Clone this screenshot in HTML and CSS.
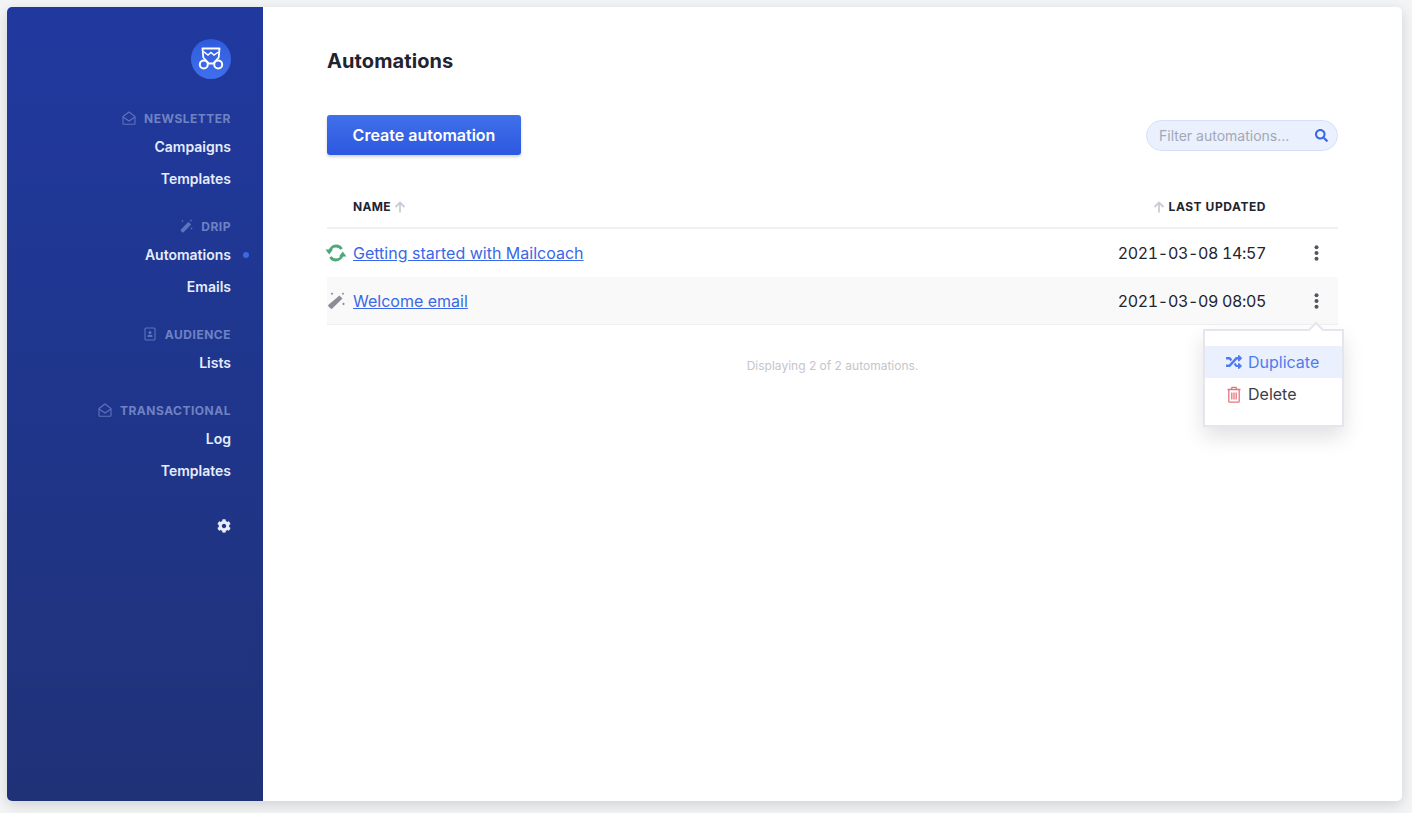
FILE: index.html
```html
<!DOCTYPE html>
<html lang="en">
<head>
    <meta charset="UTF-8">
    <meta name="viewport" content="width=device-width, initial-scale=1.0">
    <title>Automations | Mailcoach</title>
    <link rel="stylesheet" href="styles.css">
</head>
<body>
    <div class="app">
        <aside class="sidebar">
            <div class="logo">
                <svg width="26" height="24" viewBox="0 0 26 24" fill="none" stroke="#fff" stroke-width="1.800">
                    <path d="M4.500 1.500h17l-.8 9-5.700 6h-4l-5.700-6z" stroke-linejoin="round"/>
                    <path d="M5.500 4.500l4.500 3.500 3-2.500 3 2.500 4.500-3" stroke-width="1.500"/>
                    <circle cx="5.800" cy="17.500" r="4" fill="#3a68e6" stroke-width="2"/>
                    <circle cx="20.200" cy="17.500" r="4" fill="#3a68e6" stroke-width="2"/>
                </svg>
            </div>

            <nav class="nav">
                <div class="nav-group">
                    <h3 class="nav-label">
                        <svg class="nav-icon" viewBox="0 0 14 14" fill="none" stroke="currentColor" stroke-width="1.100"><path d="M1 5.500L7 1l6 4.500v7a.8.8 0 0 1-.8.800H1.800a.8.8 0 0 1-.8-.8z"/><path d="M1 6l6 4 6-4"/></svg>
                        Newsletter
                    </h3>
                    <a class="nav-item" href="#">Campaigns</a>
                    <a class="nav-item" href="#">Templates</a>
                </div>
                <div class="nav-group">
                    <h3 class="nav-label">
                        <svg class="nav-icon" viewBox="0 0 14 14" fill="currentColor"><path d="M9.500 2.800l2.700 2.700-7.600 7.800a1 1 0 0 1-1.400 0l-1.300-1.300a1 1 0 0 1 0-1.400z"/><path d="M12 .5l1 1-1 1-1-1zM3.500 1l1 1-1 1-1-1zM12.500 8.500l1 1-1 1-1-1z"/></svg>
                        Drip
                    </h3>
                    <a class="nav-item nav-item-active" href="#">Automations</a>
                    <a class="nav-item" href="#">Emails</a>
                </div>
                <div class="nav-group">
                    <h3 class="nav-label">
                        <svg class="nav-icon" viewBox="0 0 14 14" fill="none" stroke="currentColor" stroke-width="1.100"><rect x="2" y="1" width="10" height="12" rx="1"/><circle cx="7" cy="5.500" r="1.500" fill="currentColor" stroke="none"/><path d="M4.500 10h5V9c0-.8-1-1.200-2.500-1.200S4.500 8.200 4.500 9z" fill="currentColor" stroke="none"/></svg>
                        Audience
                    </h3>
                    <a class="nav-item" href="#">Lists</a>
                </div>
                <div class="nav-group">
                    <h3 class="nav-label">
                        <svg class="nav-icon" viewBox="0 0 14 14" fill="none" stroke="currentColor" stroke-width="1.100"><path d="M1 5.500L7 1l6 4.500v7a.8.8 0 0 1-.8.800H1.800a.8.8 0 0 1-.8-.8z"/><path d="M1 6l6 4 6-4"/></svg>
                        Transactional
                    </h3>
                    <a class="nav-item" href="#">Log</a>
                    <a class="nav-item" href="#">Templates</a>
                </div>
                <a class="nav-settings" href="#" title="Settings">
                    <svg class="gear" width="14" height="14" viewBox="0 0 512 512" fill="currentColor"><path d="M487.4 315.700l-42.600-24.600c4.300-23.200 4.300-47 0-70.200l42.600-24.600c4.900-2.800 7.100-8.600 5.500-14-11.100-35.600-30-67.800-54.700-94.600-3.800-4.100-10-5.100-14.800-2.300L380.800 110c-17.900-15.400-38.500-27.300-60.800-35.100V25.800c0-5.600-3.900-10.500-9.400-11.700-36.700-8.200-74.300-7.800-109.200 0-5.500 1.200-9.400 6.100-9.400 11.700V75c-22.200 7.900-42.800 19.800-60.800 35.100L88.700 85.500c-4.900-2.800-11-1.900-14.800 2.300-24.700 26.700-43.600 58.900-54.700 94.600-1.700 5.400.6 11.200 5.500 14L67.300 221c-4.300 23.200-4.300 47 0 70.200l-42.600 24.600c-4.900 2.800-7.100 8.600-5.500 14 11.100 35.600 30 67.800 54.700 94.600 3.800 4.100 10 5.100 14.800 2.300l42.600-24.600c17.900 15.400 38.500 27.300 60.800 35.100v49.200c0 5.600 3.900 10.500 9.400 11.700 36.700 8.200 74.300 7.800 109.200 0 5.500-1.200 9.400-6.100 9.400-11.700v-49.200c22.200-7.900 42.800-19.800 60.800-35.100l42.600 24.600c4.900 2.800 11 1.900 14.800-2.300 24.700-26.700 43.600-58.900 54.700-94.600 1.500-5.500-.7-11.300-5.600-14.100zM256 336c-44.100 0-80-35.900-80-80s35.900-80 80-80 80 35.900 80 80-35.900 80-80 80z"/></svg>
                </a>
            </nav>
        </aside>

        <main class="main">
            <h1 class="title">Automations</h1>

            <div class="toolbar">
                <button class="button" type="button">Create automation</button>
                <div class="search">
                    <input class="search-input" type="text" placeholder="Filter automations...">
                    <svg width="13" height="13" viewBox="0 0 512 512" fill="#3a68e6"><path d="M505 442.700L405.300 343c-4.500-4.500-10.600-7-17-7H372c27.600-35.300 44-79.700 44-128C416 93.100 322.900 0 208 0S0 93.100 0 208s93.100 208 208 208c48.300 0 92.700-16.400 128-44v16.300c0 6.400 2.500 12.500 7 17l99.700 99.700c9.400 9.400 24.600 9.400 33.900 0l28.300-28.300c9.400-9.400 9.400-24.600.1-34zM208 336c-70.700 0-128-57.200-128-128 0-70.700 57.200-128 128-128 70.700 0 128 57.200 128 128 0 70.700-57.200 128-128 128z"/></svg>
                </div>
            </div>

            <table class="table">
                <thead>
                    <tr>
                        <th class="col-name">
                            Name
                            <svg class="sort" viewBox="0 0 12 12" fill="none" stroke="currentColor" stroke-width="1.800"><path d="M6 11.500V1.500M1.500 6L6 1.500 10.500 6"/></svg>
                        </th>
                        <th class="col-date">
                            <svg class="sort" viewBox="0 0 12 12" fill="none" stroke="currentColor" stroke-width="1.800"><path d="M6 11.500V1.500M1.500 6L6 1.500 10.500 6"/></svg>
                            Last updated
                        </th>
                        <th class="col-actions"></th>
                    </tr>
                </thead>
                <tbody>
                    <tr>
                        <td class="col-name">
                            <svg class="status" width="22" height="18" viewBox="0 0 22 18" fill="none" stroke="#4fa87c" stroke-width="2.800"><path d="M4.500 8C5 4.500 7.800 2 11 2c2.500 0 4.500 1.200 5.500 3.200"/><path d="M17.500 10c-.5 3.500-3.300 6-6.500 6-2.500 0-4.500-1.200-5.500-3.200"/><path d="M.5 5.500h7.500l-3.800 5z" fill="#4fa87c" stroke="none"/><path d="M21.500 12.500h-7.500l3.800-5z" fill="#4fa87c" stroke="none"/></svg>
                            <a class="link" href="#">Getting started with Mailcoach</a>
                        </td>
                        <td class="col-date">2021-03-08 14:57</td>
                        <td class="col-actions"><svg class="dots" width="5" height="16" viewBox="0 0 5 16" fill="currentColor"><circle cx="2.500" cy="2.200" r="2"/><circle cx="2.500" cy="8" r="2"/><circle cx="2.500" cy="13.800" r="2"/></svg></td>
                    </tr>
                    <tr class="row-hover">
                        <td class="col-name">
                            <svg class="status" width="22" height="18" viewBox="0 0 22 18" fill="#8b8d98"><path d="M14.500 3.500l3 3-10.200 10a1.200 1.200 0 0 1-1.700 0L3.500 14.400a1.200 1.200 0 0 1 0-1.700z"/><path d="M18 .5l1.200 1.200L18 2.900l-1.200-1.200zM7 .5l1.300 1.300L7 3.100 5.700 1.800zM18.500 10.500l1.400 1.400-1.400 1.400-1.400-1.400z"/></svg>
                            <a class="link" href="#">Welcome email</a>
                        </td>
                        <td class="col-date">2021-03-09 08:05</td>
                        <td class="col-actions"><svg class="dots" width="5" height="16" viewBox="0 0 5 16" fill="currentColor"><circle cx="2.500" cy="2.200" r="2"/><circle cx="2.500" cy="8" r="2"/><circle cx="2.500" cy="13.800" r="2"/></svg></td>
                    </tr>
                </tbody>
            </table>

            <p class="count">Displaying 2 of 2 automations.</p>

            <div class="dropdown">
                <a class="dropdown-item dropdown-item-active" href="#">
                    <svg width="16" height="16" viewBox="0 0 512 512" fill="currentColor"><path d="M504.971 359.029c9.373 9.373 9.373 24.569 0 33.941l-80 79.984c-15.010 15.010-40.971 4.490-40.971-16.971V416h-58.785a12.004 12.004 0 0 1-8.773-3.812l-70.556-75.596 53.333-57.143L352 352h32v-39.981c0-21.438 25.943-31.998 40.971-16.971l80 79.981zM12 176h84l52.781 56.551 53.333-57.143-70.556-75.596A11.999 11.999 0 0 0 122.785 96H12c-6.627 0-12 5.373-12 12v56c0 6.627 5.373 12 12 12zm372 0v39.984c0 21.460 25.961 31.980 40.971 16.971l80-79.984c9.373-9.373 9.373-24.569 0-33.941l-80-79.981C409.943 24.021 384 34.582 384 56.019V96h-58.785a12.004 12.004 0 0 0-8.773 3.812L96 336H12c-6.627 0-12 5.373-12 12v56c0 6.627 5.373 12 12 12h110.785c3.326 0 6.503-1.381 8.773-3.812L352 176h32z"/></svg>
                    Duplicate
                </a>
                <a class="dropdown-item" href="#">
                    <svg class="trash" width="16" height="17" viewBox="0 0 16 17" fill="none" stroke="currentColor" stroke-width="1.300"><path d="M1.500 3.500h13M5.300 3.300l.7-2h4l.7 2"/><path d="M2.800 3.500v11.700c0 .6.400 1 1 1h8.400c.6 0 1-.4 1-1V3.500"/><path d="M5.800 6.500v7M8 6.500v7M10.200 6.500v7"/></svg>
                    Delete
                </a>
            </div>
        </main>
    </div>
</body>
</html>
```

FILE: styles.css
```css
* {
    box-sizing: border-box;
}
html,
body {
    height: 100%;
}
body {
    margin: 0;
    padding: 7px 10px 12px 7px;
    background: #f3f4f6;
    color: #1f2430;
    font-family: Inter, "Liberation Sans", sans-serif;
    font-size: 16px;
}
.app {
    display: flex;
    height: 100%;
    background: #fff;
    border-radius: 5px;
    box-shadow: 0 4px 14px rgba(0, 0, 0, 0.14);
    overflow: hidden;
}

/* sidebar */
.sidebar {
    flex: 0 0 256px;
    display: flex;
    flex-direction: column;
    align-items: flex-end;
    padding: 32px 32px 0 0;
    background: linear-gradient(#20399f, #1f3278);
}
.logo {
    display: flex;
    align-items: center;
    justify-content: center;
    width: 40px;
    height: 40px;
    border-radius: 50%;
    background: linear-gradient(#2f5cdc, #3f70ec);
}
.nav {
    display: flex;
    flex-direction: column;
    align-items: flex-end;
    margin-top: 30px;
}
.nav-group {
    display: flex;
    flex-direction: column;
    align-items: flex-end;
    margin-bottom: 22px;
}
.nav-label {
    display: flex;
    align-items: center;
    margin: 0 0 4px;
    height: 18px;
    color: #6f82c4;
    font-size: 12px;
    font-weight: 700;
    letter-spacing: 0.5px;
    text-transform: uppercase;
}
.nav-icon {
    width: 14px;
    height: 14px;
    margin-right: 8px;
    color: #5f73bb;
}
.nav-item {
    position: relative;
    display: block;
    height: 32px;
    line-height: 32px;
    color: #e6ecfb;
    font-size: 14px;
    font-weight: 600;
    text-decoration: none;
}
.nav-item-active:after {
    content: '';
    position: absolute;
    top: 13px;
    right: -18px;
    width: 6px;
    height: 6px;
    border-radius: 50%;
    background: #3a68e6;
}
.nav-settings {
    display: block;
    margin-top: 10px;
    color: #e6ecfb;
}
.gear {
    display: block;
}

/* main */
.main {
    position: relative;
    flex: 1;
    padding: 0 64px;
}
.title {
    margin: 41px 0 0;
    font-size: 20px;
    line-height: 26px;
    font-weight: 700;
    letter-spacing: 0.1px;
}
.toolbar {
    display: flex;
    align-items: center;
    justify-content: space-between;
    margin-top: 41px;
}
.button {
    width: 194px;
    height: 40px;
    border: 0;
    border-radius: 3px;
    background: linear-gradient(#4070ea, #2d58e0);
    box-shadow: 0 2px 3px rgba(0, 0, 0, 0.18);
    color: #fff;
    font-family: inherit;
    font-size: 16px;
    font-weight: 600;
}
.search {
    display: flex;
    align-items: center;
    width: 192px;
    height: 31px;
    padding: 0 9px 0 12px;
    border: 1px solid #d5e0f8;
    border-radius: 16px;
    background: #eaf0fd;
}
.search-input {
    flex: 1;
    min-width: 0;
    padding: 0;
    border: 0;
    outline: 0;
    background: transparent;
    font-family: inherit;
    font-size: 14px;
}
.search-input::placeholder {
    color: #a3a8b6;
}

/* table */
.table {
    width: 100%;
    margin-top: 30px;
    border-collapse: separate;
    border-spacing: 0;
}
.table th {
    height: 44px;
    border-bottom: 2px solid #f0f0f2;
    font-size: 12px;
    font-weight: 700;
    letter-spacing: 0.55px;
    text-transform: uppercase;
}
.table td {
    height: 48px;
    font-size: 16px;
}
.table th.col-name {
    letter-spacing: 0.3px;
}
.col-name {
    position: relative;
    padding: 0 0 0 26px;
    text-align: left;
}
.col-date {
    padding: 0;
    text-align: right;
}
td.col-date {
    font-variant-numeric: tabular-nums;
    letter-spacing: -0.35px;
}
.col-actions {
    width: 72px;
    text-align: right;
    padding: 0 19px 0 0;
    color: #54565f;
}
.sort {
    width: 12px;
    height: 12px;
    color: #c9ccd4;
    vertical-align: -2px;
}
.status {
    position: absolute;
    top: 15px;
    left: -2px;
}
.dots {
    display: block;
    margin-left: auto;
}
.row-hover td {
    background: #f9f9f9;
    border-bottom: 1px solid #eef0f2;
}
.link {
    color: #3a68e6;
}
.count {
    margin: 33px 0 0;
    text-align: center;
    color: #c4c6cc;
    font-size: 12px;
    line-height: 16px;
}

/* menu under the row's dots */
.dropdown {
    position: absolute;
    top: 322px;
    right: 58px;
    width: 141px;
    height: 98px;
    padding: 15px 0;
    border: 2px solid #e4e5ee;
    background: #fff;
    box-shadow: 0 10px 20px rgba(0, 0, 0, 0.12);
}
.dropdown:before {
    content: '';
    position: absolute;
    top: -7px;
    right: 20px;
    width: 10px;
    height: 10px;
    background: #fff;
    border-top: 2px solid #e4e5ee;
    border-left: 2px solid #e4e5ee;
    transform: rotate(45deg);
}
.dropdown-item {
    display: flex;
    align-items: center;
    gap: 6px;
    height: 32px;
    padding-left: 21px;
    color: #3b3e4a;
    font-size: 16px;
    text-decoration: none;
}
.dropdown-item-active {
    background: #eaf0fd;
    color: #4f7cf0;
}
.trash {
    color: #e8737f;
}
```
